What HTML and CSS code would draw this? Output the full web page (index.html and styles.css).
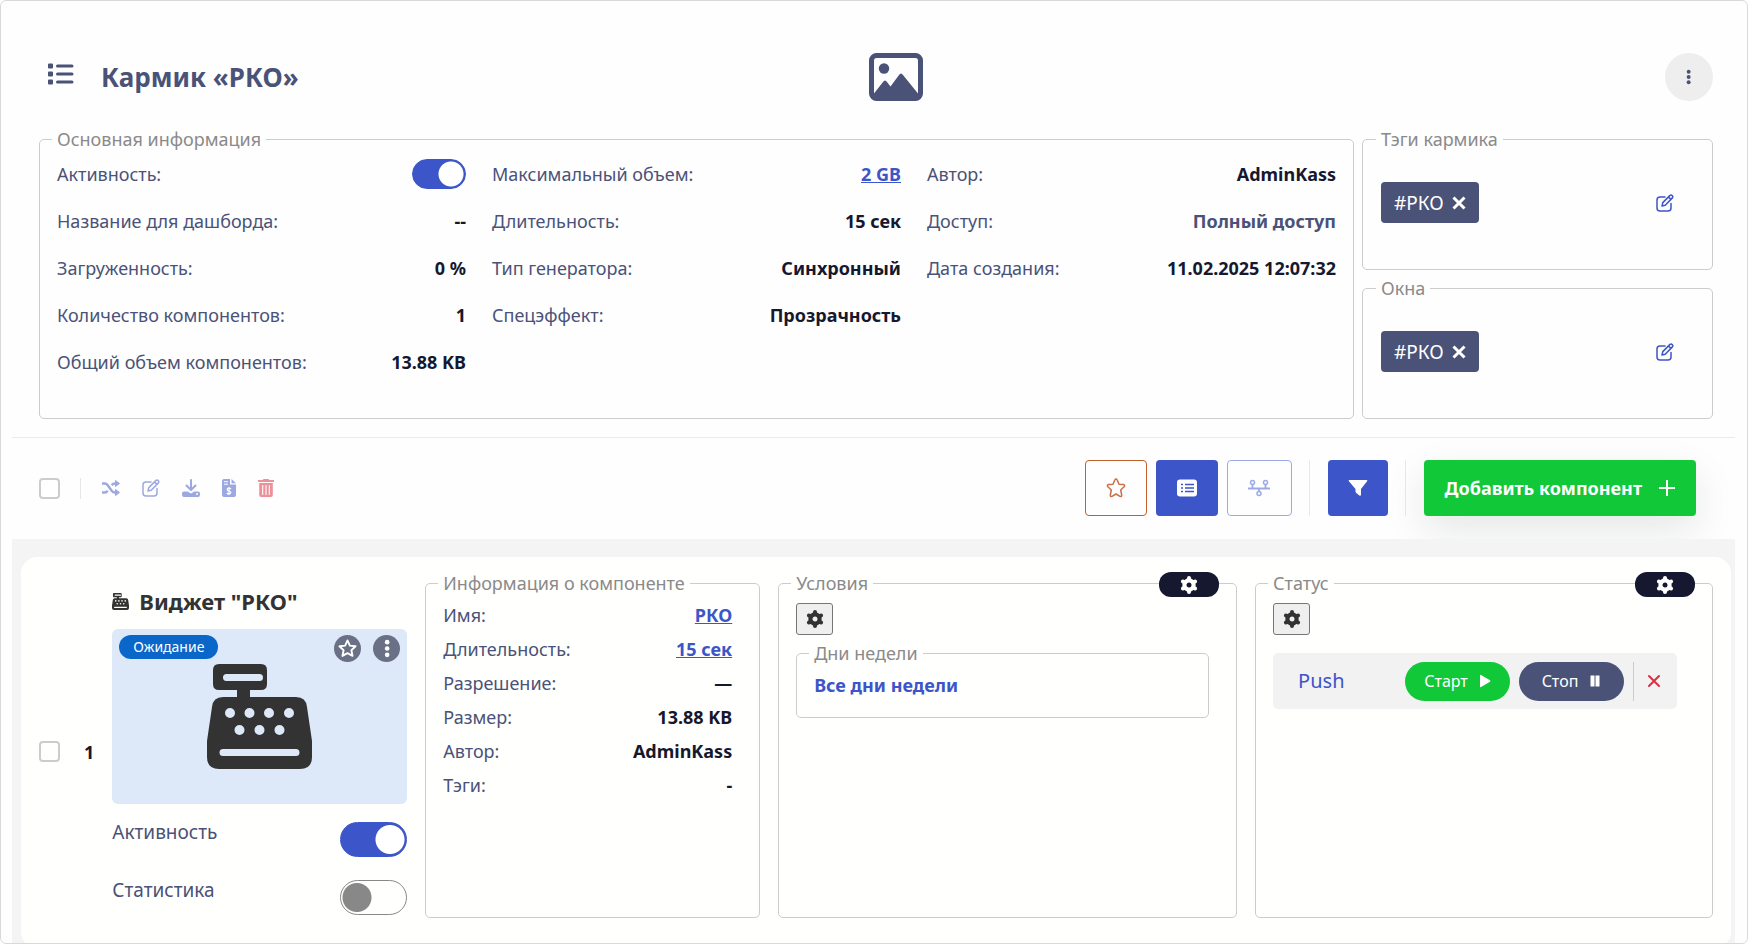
FILE: index.html
```html
<!DOCTYPE html>
<html lang="ru">
<head>
<meta charset="utf-8">
<meta name="viewport" content="width=device-width, initial-scale=1">
<title>Кармик «РКО»</title>
<link rel="stylesheet" href="styles.css">
</head>
<body>
<svg class="sprite" aria-hidden="true">
  <symbol id="i-gear" viewBox="0 0 18 18">
    <circle cx="9" cy="9" r="4.6" fill="none" stroke="currentColor" stroke-width="4.2"/>
    <path d="M9 4V2M9 14v2M13.3 6.5l1.8-1M4.7 11.5l-1.8 1M4.7 6.5l-1.8-1M13.3 11.5l1.8 1" fill="none" stroke="currentColor" stroke-width="4" stroke-linecap="round"/>
  </symbol>
  <symbol id="i-edit" viewBox="0 0 18 18">
    <path d="M9 3H4Q1 3 1 6v8q0 3 3 3h8q3 0 3-3V9.500M6 12l.8-3.400L14 1.400q1.300-.8 2.300.3 1 1.100.1 2.200L9.200 11.200zM12.500 3l2.400 2.400" fill="none" stroke="currentColor" stroke-width="1.500" stroke-linecap="round" stroke-linejoin="round"/>
  </symbol>
  <symbol id="i-star" viewBox="0 0 20 20">
    <path d="M10 1.500l2.500 5.500 6 .7-4.400 4.100 1.200 6L10 14.900l-5.300 2.900 1.200-6L1.500 7.700l6-.7z" fill="none" stroke="currentColor" stroke-width="2" stroke-linejoin="round"/>
  </symbol>
  <symbol id="i-dots" viewBox="0 0 6 18">
    <circle cx="3" cy="3" r="2.200" fill="currentColor"/><circle cx="3" cy="9" r="2.200" fill="currentColor"/><circle cx="3" cy="15" r="2.200" fill="currentColor"/>
  </symbol>
  <symbol id="i-close" viewBox="0 0 14 14">
    <path d="M1.500 1.500l11 11M12.500 1.500l-11 11" stroke="currentColor" stroke-width="3"/>
  </symbol>
  <symbol id="i-register" viewBox="0 0 105 105">
    <path fill="currentColor" fill-rule="evenodd" d="M12 0h42q6 0 6 6v14q0 6-6 6H43v7h46q10 0 11 10l5 34v16q0 12-12 12H12Q0 105 0 93V77l5-34q1-10 11-10h14v-7H12q-6 0-6-6V6q0-6 6-6zM19.500 10a3.500 3.500 0 0 0 0 7h33a3.500 3.500 0 0 0 0-7zM16 85a3.500 3.500 0 0 0 0 7h73a3.500 3.500 0 0 0 0-7zM18 49a5 5 0 1 0 10 0 5 5 0 1 0-10 0zm19.500 0a5 5 0 1 0 10 0 5 5 0 1 0-10 0zm19.500 0a5 5 0 1 0 10 0 5 5 0 1 0-10 0zm20 0a5 5 0 1 0 10 0 5 5 0 1 0-10 0zM27.500 66a5 5 0 1 0 10 0 5 5 0 1 0-10 0zm20 0a5 5 0 1 0 10 0 5 5 0 1 0-10 0zm20 0a5 5 0 1 0 10 0 5 5 0 1 0-10 0z"/>
  </symbol>
</svg>

<div class="frame">
  <section class="summary">
    <header class="head">
      <div class="head-title">
        <svg class="list-icon" viewBox="0 0 26 22" aria-hidden="true"><path d="M9.500 3H24M9.500 11H24M9.500 19H24" stroke="currentColor" stroke-width="3" stroke-linecap="round"/><path d="M0 1.500Q0 .5 1 .5h3q1 0 1 1v3q0 1-1 1H1q-1 0-1-1zM0 9.500q0-1 1-1h3q1 0 1 1v3q0 1-1 1H1q-1 0-1-1zM0 17.500q0-1 1-1h3q1 0 1 1v3q0 1-1 1H1q-1 0-1-1z" fill="currentColor"/></svg>
        <h1>Кармик «РКО»</h1>
      </div>
      <svg class="picture-icon" viewBox="0 0 54 48" aria-hidden="true"><rect x="2.500" y="2.500" width="49" height="43" rx="5" fill="none" stroke="currentColor" stroke-width="5"/><circle cx="15" cy="15.500" r="5.200" fill="currentColor"/><path d="M3 43L14 29q2-3 4 0l3.500 4.500L30 22q2-3 4 0l17 21-3 4H6z" fill="currentColor"/></svg>
      <button class="round-menu" type="button" aria-label="Меню"><svg viewBox="0 0 6 18"><use href="#i-dots"/></svg></button>
    </header>

    <div class="info-grid">
      <fieldset class="box box-main">
        <legend>Основная информация</legend>
        <div class="columns">
          <dl class="facts facts-tall">
            <div><dt><label for="active-main">Активность:</label></dt><dd><input class="switch" id="active-main" type="checkbox" checked></dd></div>
            <div><dt>Название для дашборда:</dt><dd>--</dd></div>
            <div><dt>Загруженность:</dt><dd>0 %</dd></div>
            <div><dt>Количество компонентов:</dt><dd>1</dd></div>
            <div><dt>Общий объем компонентов:</dt><dd>13.88 KB</dd></div>
          </dl>
          <dl class="facts facts-tall">
            <div><dt>Максимальный объем:</dt><dd><a href="#">2 GB</a></dd></div>
            <div><dt>Длительность:</dt><dd>15 сек</dd></div>
            <div><dt>Тип генератора:</dt><dd>Синхронный</dd></div>
            <div><dt>Спецэффект:</dt><dd>Прозрачность</dd></div>
          </dl>
          <dl class="facts facts-tall">
            <div><dt>Автор:</dt><dd>AdminKass</dd></div>
            <div><dt>Доступ:</dt><dd class="muted">Полный доступ</dd></div>
            <div><dt>Дата создания:</dt><dd>11.02.2025 12:07:32</dd></div>
          </dl>
        </div>
      </fieldset>
      <div class="tags">
        <fieldset class="box box-tags">
          <legend>Тэги кармика</legend>
          <div class="tag-row">
            <button class="tag" type="button">#РКО<svg viewBox="0 0 14 14"><use href="#i-close"/></svg></button>
            <button class="icon-btn" type="button" aria-label="Изменить тэги"><svg viewBox="0 0 18 18"><use href="#i-edit"/></svg></button>
          </div>
        </fieldset>
        <fieldset class="box box-tags">
          <legend>Окна</legend>
          <div class="tag-row">
            <button class="tag" type="button">#РКО<svg viewBox="0 0 14 14"><use href="#i-close"/></svg></button>
            <button class="icon-btn" type="button" aria-label="Изменить окна"><svg viewBox="0 0 18 18"><use href="#i-edit"/></svg></button>
          </div>
        </fieldset>
      </div>
    </div>
  </section>

  <section class="toolbar">
    <div class="bulk">
      <input class="check" type="checkbox" aria-label="Выбрать все">
      <span class="rule"></span>
      <div class="bulk-icons">
        <button class="icon-btn" type="button" aria-label="Перемешать"><svg viewBox="0 0 18 18"><path d="M0 4.500h2.500q2 0 3.200 1.700l4 5.600q1.300 1.700 3.300 1.700h2M0 13.500h2.500q2 0 3.200-1.700M9.700 6.200Q11 4.500 13 4.500h2" fill="none" stroke="currentColor" stroke-width="2.400"/><path d="M13.500 1.500v6L17.500 4.500zM13.500 10.500v6l4-3z" fill="currentColor" stroke="currentColor" stroke-linejoin="round"/></svg></button>
        <button class="icon-btn" type="button" aria-label="Изменить"><svg viewBox="0 0 18 18"><use href="#i-edit"/></svg></button>
        <button class="icon-btn" type="button" aria-label="Скачать"><svg viewBox="0 0 18 18"><path d="M9 1v9M4.500 6.500L9 11l4.500-4.500" fill="none" stroke="currentColor" stroke-width="2" stroke-linecap="round" stroke-linejoin="round"/><path fill="currentColor" fill-rule="evenodd" d="M2 12.500h3.500L9 14.500l3.500-2H16q2 0 2 2V16q0 2-2 2H2q-2 0-2-2v-1.500q0-2 2-2zM14 15a1 1 0 1 0 2 0 1 1 0 1 0-2 0z"/></svg></button>
        <button class="icon-btn doc" type="button" aria-label="Стоимость"><svg viewBox="0 0 14 18"><path d="M2 0h6v5.500h6V16q0 2-2 2H2q-2 0-2-2V2q0-2 2-2zM9.500 0L14 4.200H9.500z" fill="currentColor"/><path d="M2 2.700h4M2 5.200h4" stroke="#fff"/><path d="M9 10Q8 9 7 9q-1.800 0-1.800 1.400T7 12t1.800 1.600T7 15q-1.200 0-2.200-1M7 8v8" fill="none" stroke="#fff" stroke-width="1.200"/></svg></button>
        <button class="icon-btn trash" type="button" aria-label="Удалить"><svg viewBox="0 0 16 18"><path fill="currentColor" d="M5.500 0h5l.8 1H16v2H0V1h4.700zM1.200 4h13.600v12q0 2-2 2H3.200q-2 0-2-2z"/><path d="M4.700 6.500v9M8 6.500v9M11.300 6.500v9" stroke="#fff" stroke-width="1.100" stroke-linecap="round"/></svg></button>
      </div>
    </div>
    <div class="actions">
      <div class="views">
        <button class="tool tool-star" type="button" aria-label="Избранное"><svg viewBox="0 0 20 20"><path d="M10 1q.8 0 1.200 1l1.800 4.200 4.500.4q1.900.5.600 2.100L14.700 12l1 5q0 2-1.700 1.400L10 16l-4 2.400Q4.300 19 4.300 17l1-5L1.900 8.700Q.6 7.100 2.500 6.600L7 6.200 8.800 2q.4-1 1.200-1z" fill="none" stroke="currentColor" stroke-width="1.500" stroke-linejoin="round"/></svg></button>
        <button class="tool tool-fill" type="button" aria-label="Список"><svg viewBox="0 0 20 20"><rect y="1.500" width="20" height="17" rx="3" fill="currentColor"/><path d="M8 6.500h9M8 10h9M8 13.500h9M4 6.500h2M4 10h2M4 13.500h2" stroke="#3c55c8" stroke-width="1.400"/></svg></button>
        <button class="tool tool-line" type="button" aria-label="Хронология"><svg viewBox="0 0 22 18"><path d="M0 9.500h22M4.500 6v3M17.500 6v3M11 10v2" stroke="currentColor" stroke-width="1.800"/><g fill="none" stroke="currentColor" stroke-width="1.500"><circle cx="4.500" cy="3.500" r="2"/><circle cx="17.500" cy="3.500" r="2"/><circle cx="11" cy="14.500" r="2"/></g></svg></button>
      </div>
      <div class="filter">
        <button class="tool tool-fill tool-filter" type="button" aria-label="Фильтр"><svg viewBox="0 0 20 20"><path d="M1.500 2h17q1.500 0 .6 1.200L13 11v5.500q0 1.500-1.300 1.200L8.300 15q-.8-.6-.8-1.500V11L.9 3.200Q0 2 1.500 2z" fill="currentColor"/></svg></button>
      </div>
      <button class="add" type="button">Добавить компонент<svg viewBox="0 0 16 16"><path d="M8 0v16M0 8h16" stroke="currentColor" stroke-width="2"/></svg></button>
    </div>
  </section>

  <main class="list">
    <article class="card">
      <div class="pick">
        <input class="check" type="checkbox" aria-label="Выбрать компонент 1">
        <span>1</span>
      </div>
      <div class="preview">
        <h2><svg viewBox="0 0 105 105" aria-hidden="true"><use href="#i-register"/></svg>Виджет "РКО"</h2>
        <div class="thumb">
          <svg class="thumb-icon" viewBox="0 0 105 105" aria-hidden="true"><use href="#i-register"/></svg>
          <div class="thumb-top">
            <span class="badge">Ожидание</span>
            <span class="thumb-actions">
              <button class="disc" type="button" aria-label="В избранное"><svg viewBox="0 0 20 20"><use href="#i-star"/></svg></button>
              <button class="disc" type="button" aria-label="Действия"><svg viewBox="0 0 6 18"><use href="#i-dots"/></svg></button>
            </span>
          </div>
        </div>
        <div class="option"><label for="active-item">Активность</label><input class="switch switch-lg" id="active-item" type="checkbox" checked></div>
        <div class="option"><label for="stats-item">Статистика</label><input class="switch switch-lg" id="stats-item" type="checkbox"></div>
      </div>

      <div class="panel">
        <fieldset class="box">
          <legend>Информация о компоненте</legend>
          <dl class="facts">
            <div><dt>Имя:</dt><dd><a href="#">РКО</a></dd></div>
            <div><dt>Длительность:</dt><dd><a href="#">15 сек</a></dd></div>
            <div><dt>Разрешение:</dt><dd>—</dd></div>
            <div><dt>Размер:</dt><dd>13.88 KB</dd></div>
            <div><dt>Автор:</dt><dd>AdminKass</dd></div>
            <div><dt>Тэги:</dt><dd>-</dd></div>
          </dl>
        </fieldset>
      </div>

      <div class="panel">
        <fieldset class="box">
          <legend>Условия</legend>
          <button class="gear-btn" type="button" aria-label="Настроить условия"><svg viewBox="0 0 18 18"><use href="#i-gear"/></svg></button>
          <fieldset class="box box-days">
            <legend>Дни недели</legend>
            <p>Все дни недели</p>
          </fieldset>
        </fieldset>
        <button class="pill" type="button" aria-label="Параметры условий"><svg viewBox="0 0 18 18"><use href="#i-gear"/></svg></button>
      </div>

      <div class="panel">
        <fieldset class="box box-status">
          <legend>Статус</legend>
          <button class="gear-btn" type="button" aria-label="Настроить статус"><svg viewBox="0 0 18 18"><use href="#i-gear"/></svg></button>
          <div class="push">
            <span class="push-name">Push</span>
            <button class="run run-start" type="button">Старт<svg viewBox="0 0 12 14"><path d="M1 1.500v11q0 1.200 1 .6l9-5.300q1-.8 0-1.600L2 .9Q1 .3 1 1.500z" fill="currentColor"/></svg></button>
            <button class="run run-stop" type="button">Стоп<svg viewBox="0 0 12 14"><path d="M1.500 1.500h4v11h-4zM6.500 1.500h4v11h-4z" fill="currentColor"/></svg></button>
            <span class="push-rule"></span>
            <button class="remove" type="button" aria-label="Удалить"><svg viewBox="0 0 14 14"><path d="M2 2l10 10M12 2L2 12" stroke="currentColor" stroke-width="2" stroke-linecap="round"/></svg></button>
          </div>
        </fieldset>
        <button class="pill" type="button" aria-label="Параметры статуса"><svg viewBox="0 0 18 18"><use href="#i-gear"/></svg></button>
      </div>
    </article>
  </main>
</div>
</body>
</html>
```

FILE: styles.css
```css
* { box-sizing: border-box; }

:root {
  --slate: #4a5278;
  --ink: #15182e;
  --blue: #3c55c8;
  --line: #ccc;
  --green: #10c838;
  --card: #fffffd;
}

body {
  margin: 0;
  font: 18px/24px "Noto Sans", "Open Sans", sans-serif;
  color: var(--slate);
  background: #fff;
}

button {
  font: inherit;
  margin: 0;
  padding: 0;
  border: 0;
  background: none;
  color: inherit;
  cursor: pointer;
}

svg { display: block; flex: none; }
.sprite { position: absolute; width: 0; height: 0; }
h1, h2, p, dl, dd { margin: 0; }
a { color: var(--blue); }

.frame {
  display: flex;
  flex-direction: column;
  height: 100vh;
  padding: 11px 12px 0 11px;
  border: 1px solid #d9d9d9;
  border-radius: 6px;
  overflow: hidden;
  background: #fefefe;
}

/* Header */
.summary {
  flex: none;
  padding: 12px 22px 18px 27px;
  border-bottom: 1px solid #ebebeb;
}
.head {
  display: grid;
  grid-template-columns: 21fr auto 20fr;
  align-items: center;
  height: 104px;
  padding-top: 2px;
}
.head-title { display: flex; align-items: center; gap: 27px; padding-left: 9px; }
.head h1 { font-size: 26px; line-height: 36px; font-weight: 700; }
.list-icon { width: 26px; height: 28px; padding-bottom: 6px; }
.picture-icon { width: 54px; height: 48px; }
.round-menu {
  display: grid;
  place-items: center;
  justify-self: end;
  width: 48px;
  height: 48px;
  border-radius: 50%;
  background: #eee;
}
.round-menu svg { height: 16px; }

/* Bordered groups */
.box {
  min-width: 0;
  margin: 0;
  padding: 4px 27px 0 17px;
  border: 1px solid var(--line);
  border-radius: 5px;
}
.box > legend {
  margin-left: -5px;
  padding: 0 5px;
  line-height: 22px;
  color: #8a8a8a;
}
.box-main { padding: 0 17px 32px; }
.box-tags { padding: 32px 38px 46px 18px; }

.info-grid { display: grid; grid-template-columns: minmax(0, 1315fr) minmax(0, 351fr); gap: 8px; }
.tags { display: grid; gap: 7px; }
.columns { display: grid; grid-template-columns: repeat(3, minmax(0, 1fr)); gap: 26px; }

.facts > div {
  display: flex;
  align-items: center;
  justify-content: space-between;
  height: 34px;
}
.facts-tall > div { height: 47px; }
.facts dd { font-weight: 700; color: var(--ink); }
.facts dd.muted { color: var(--slate); }

.tag-row { display: flex; align-items: center; justify-content: space-between; }
.tag {
  display: flex;
  align-items: center;
  gap: 8px;
  height: 41px;
  padding: 0 13px;
  border-radius: 4px;
  background: var(--slate);
  color: #fff;
  font-size: 19px;
}
.tag svg { width: 14px; height: 14px; }
.icon-btn { color: var(--blue); }
.icon-btn svg { width: 18px; height: 18px; }
.doc svg { width: 14px; }
.trash svg { width: 16px; }
.trash { color: #dc2638; }

/* Inputs */
.switch {
  appearance: none;
  display: block;
  width: 54px;
  height: 30px;
  margin: 0;
  border: 1px solid var(--blue);
  border-radius: 18px;
  background: radial-gradient(circle at 38px 14px, #fff 12px, var(--blue) 13px);
}
.switch-lg {
  width: 67px;
  height: 35px;
  border-color: #888;
  background: radial-gradient(circle at 16px 50%, #888 14px, transparent 15px);
}
.switch-lg:checked {
  border-color: var(--blue);
  background: radial-gradient(circle at 49px 50%, #fff 14px, var(--blue) 15px);
}
.check {
  appearance: none;
  flex: none;
  width: 21px;
  height: 21px;
  margin: 0;
  border: 2px solid var(--line);
  border-radius: 4px;
  background: #fff;
}

/* Toolbar */
.toolbar {
  display: flex;
  flex: none;
  align-items: center;
  justify-content: space-between;
  padding: 22px 39px 23px 27px;
}
.bulk { display: flex; align-items: center; }
.rule { width: 1px; height: 21px; margin: 0 21px 0 20px; background: #e6e6e6; }
.bulk-icons { display: flex; gap: 22px; opacity: .5; }
.actions { display: flex; gap: 18px; }
.views,
.filter {
  display: flex;
  gap: 9px;
  padding-right: 17px;
  border-right: 1px solid #e9e9e9;
}
.tool {
  display: grid;
  place-items: center;
  width: 62px;
  height: 56px;
  border-radius: 4px;
}
.tool svg { width: 20px; height: 20px; }
.tool-star { border: 1px solid #c0602c; color: #c97048; }
.tool-fill { background: var(--blue); color: #fff; }
.tool-line { width: 65px; border: 1px solid #9daae3; color: #9daae3; }
.tool-line svg { width: 22px; height: 18px; }
.tool-filter { width: 60px; }
.add {
  display: flex;
  align-items: center;
  gap: 17px;
  height: 56px;
  padding: 0 21px;
  border-radius: 4px;
  background: var(--green);
  box-shadow: 0 15px 40px rgba(20, 30, 40, .1);
  color: #fff;
  font-weight: 700;
}
.add svg { width: 16px; height: 16px; }

/* Component list */
.list { flex: none; padding: 18px 4px 18px 9px; background: #f4f4f4; }
.card {
  display: grid;
  grid-template-columns: auto minmax(0, 295fr) minmax(0, 335fr) minmax(0, 459fr) minmax(0, 458fr);
  column-gap: 18px;
  padding: 15px 18px 30px;
  border-radius: 16px;
  background: var(--card);
}
.pick {
  display: flex;
  align-items: center;
  gap: 24px;
  padding-top: 13px;
  color: var(--ink);
  font-weight: 700;
}
.preview { padding: 14px 0 3px; }
.preview h2 {
  display: flex;
  align-items: center;
  gap: 10px;
  margin-bottom: 13px;
  font-size: 22px;
  line-height: 30px;
  color: #333;
}
.preview h2 svg { width: 17px; height: 17px; }
.thumb {
  position: relative;
  display: grid;
  place-items: center;
  height: 175px;
  border-radius: 6px;
  background: #dde8f8;
  color: #333;
}
.thumb-icon { width: 105px; height: 105px; }
.thumb-top {
  position: absolute;
  top: 6px;
  left: 7px;
  right: 7px;
  display: flex;
  align-items: flex-start;
  justify-content: space-between;
}
.badge {
  padding: 0 14px;
  border-radius: 12px;
  background: #0a66c8;
  color: #fff;
  font-size: 14px;
}
.thumb-actions { display: flex; gap: 12px; }
.disc {
  display: grid;
  place-items: center;
  width: 27px;
  height: 27px;
  border-radius: 50%;
  background: #6a7085;
  color: #fff;
}
.disc svg { height: 19px; }
.option {
  display: flex;
  justify-content: space-between;
  margin-top: 18px;
  font-size: 19px;
  line-height: 20px;
}
.option + .option { margin-top: 23px; }

.panel { position: relative; display: grid; }
.pill {
  position: absolute;
  top: 0;
  right: 18px;
  display: grid;
  place-items: center;
  width: 60px;
  height: 25px;
  border-radius: 12px;
  background: var(--ink);
  color: #fff;
}
.pill svg, .gear-btn svg { width: 18px; height: 18px; }
.gear-btn {
  display: grid;
  place-items: center;
  width: 37px;
  height: 32px;
  margin: 5px 0 7px;
  border: 1px solid #767676;
  border-radius: 3px;
  background: #efefef;
  color: #333;
}
.box-days { padding: 4px 17px 15px; }
.box-days p { line-height: 34px; font-weight: 700; color: var(--blue); }
.box-status { padding-right: 35px; }

.push {
  display: flex;
  align-items: center;
  height: 56px;
  margin-top: 18px;
  padding: 0 16px 0 25px;
  border-radius: 5px;
  background: #f2f2f3;
}
.push-name { margin-right: auto; font-size: 20px; color: var(--blue); }
.run {
  display: flex;
  align-items: center;
  justify-content: center;
  gap: 11px;
  width: 105px;
  height: 39px;
  margin-right: 9px;
  border-radius: 20px;
  color: #fff;
  font-size: 16px;
}
.run svg { width: 12px; height: 14px; }
.run-start { background: var(--green); }
.run-stop { background: var(--slate); }
.push-rule { width: 1px; height: 39px; background: var(--line); }
.remove { padding-left: 13px; color: #dc2f42; }
.remove svg { width: 14px; height: 14px; }
```
